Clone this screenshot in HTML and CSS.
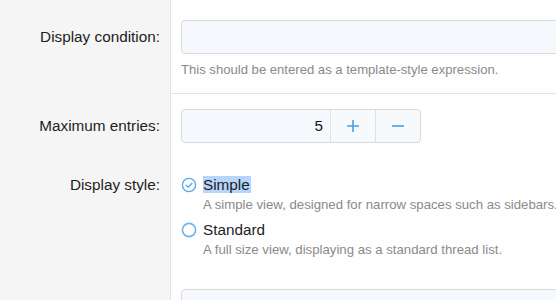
FILE: index.html
```html
<!doctype html>
<html lang="en">
<head>
	<meta charset="UTF-8">
	<title>Widget options</title>
	<link rel="stylesheet" href="styles.css">
</head>
<body>
	<div class="form">
		<div class="row row-split">
			<div class="row-label"><span class="label-line">Display condition:</span></div>
			<div class="row-body">
				<div class="input input-wide"></div>
				<div class="hint">This should be entered as a template-style expression.</div>
			</div>
		</div>
		<div class="row row-number">
			<div class="row-label"><span class="label-line">Maximum entries:</span></div>
			<div class="row-body">
				<div class="number">
					<div class="number-value">5</div>
					<div class="number-btn">
						<svg width="14" height="14" viewBox="0 0 14 14"><path d="M7 1v12M1 7h12" stroke="#4a9fe0" stroke-width="1.6" fill="none"/></svg>
					</div>
					<div class="number-btn">
						<svg width="14" height="14" viewBox="0 0 14 14"><path d="M1 7h12" stroke="#4a9fe0" stroke-width="1.6" fill="none"/></svg>
					</div>
				</div>
			</div>
		</div>
		<div class="row row-radio">
			<div class="row-label"><span class="radio-label">Display style:</span></div>
			<div class="row-body">
				<div class="option">
					<div class="option-line">
						<svg class="radio" width="16" height="16" viewBox="0 0 16 16"><circle cx="8" cy="8" r="6.6" stroke="#5aa7e4" stroke-width="1.3" fill="none"/><path d="M5.2 8.2l2 2 3.8-4" stroke="#5aa7e4" stroke-width="1.3" fill="none" stroke-linecap="round" stroke-linejoin="round"/></svg>
						<span class="option-text"><span class="selected">Simple</span></span>
					</div>
					<div class="option-desc">A simple view, designed for narrow spaces such as sidebars.</div>
				</div>
				<div class="option">
					<div class="option-line">
						<svg class="radio" width="16" height="16" viewBox="0 0 16 16"><circle cx="8" cy="8" r="6.6" stroke="#6fb3ea" stroke-width="1.6" fill="#fff"/></svg>
						<span class="option-text">Standard</span>
					</div>
					<div class="option-desc">A full size view, displaying as a standard thread list.</div>
				</div>
			</div>
		</div>
		<div class="row row-last">
			<div class="row-label"></div>
			<div class="row-body">
				<div class="input input-wide"></div>
			</div>
		</div>
	</div>
</body>
</html>
```

FILE: styles.css
```css
html, body {
	margin: 0;
	padding: 0;
	overflow: hidden;
	background: #fefefe;
}
body {
	font-family: "Liberation Sans", Arial, sans-serif;
	color: #1e1e1e;
	width: 556px;
	height: 300px;
}
.form {
	display: flex;
	flex-direction: column;
	height: 300px;
	overflow: hidden;
}
.row {
	display: flex;
	flex-shrink: 0;
}
.row-label {
	flex: 0 0 171px;
	box-sizing: border-box;
	background: #f5f5f5;
	border-right: 1px solid #e3e3e3;
	text-align: right;
	padding-right: 10px;
	font-size: 15.3px;
}
.row-body {
	flex: 1;
	min-width: 0;
	padding-left: 10px;
	white-space: nowrap;
	overflow: hidden;
}
.label-line {
	display: block;
	line-height: 34px;
}

/* display condition */
.row-split .row-label {
	padding-top: 20px;
}
.row-split .row-body {
	padding-top: 20px;
	padding-bottom: 14px;
	border-bottom: 1px solid #e3e3e3;
}
.input {
	box-sizing: border-box;
	height: 34px;
	background: #f5f9fd;
	border: 1px solid #dadada;
	border-radius: 4px;
}
.input-wide {
	width: 420px;
}
.hint {
	margin-top: 7px;
	font-size: 13.1px;
	line-height: 18px;
	color: #8a8a8a;
}

/* maximum entries */
.row-number .row-label {
	padding-top: 15px;
}
.row-number .row-body {
	padding-top: 15px;
	padding-bottom: 15px;
}
.number {
	display: flex;
	box-sizing: border-box;
	width: 240px;
	height: 34px;
	background: #f5f9fd;
	border: 1px solid #dadada;
	border-radius: 4px;
}
.number-value {
	flex: 1;
	text-align: right;
	padding-right: 7px;
	font-size: 15.3px;
	line-height: 32px;
	color: #141414;
}
.number-btn {
	flex: 0 0 45px;
	box-sizing: border-box;
	display: flex;
	align-items: center;
	justify-content: center;
	border-left: 1px solid #e2e2e2;
	background: #f7fafd;
}
.number-btn:last-child {
	border-radius: 0 4px 4px 0;
}

/* display style */
.row-radio .row-label {
	padding-top: 18px;
}
.radio-label {
	display: block;
	line-height: 18px;
}
.row-radio .row-body {
	padding-top: 18px;
	padding-bottom: 15px;
}
.option + .option {
	margin-top: 7px;
}
.option-line {
	display: flex;
	align-items: center;
	height: 18px;
}
.radio {
	flex: 0 0 16px;
	margin-right: 6px;
}
.option-text {
	font-size: 15.3px;
	line-height: 18px;
}
.selected {
	background: #b5d5fb;
	padding: 0 1px 0 0;
	display: inline-block;
	line-height: 17px;
}
.option-desc {
	margin-top: 2px;
	padding-left: 22px;
	font-size: 13.2px;
	line-height: 18px;
	color: #8a8a8a;
}

.row-last {
	flex: 1 1 auto;
	flex-shrink: 1;
	min-height: 0;
}
.row-last .row-body {
	padding-top: 15px;
}
```
